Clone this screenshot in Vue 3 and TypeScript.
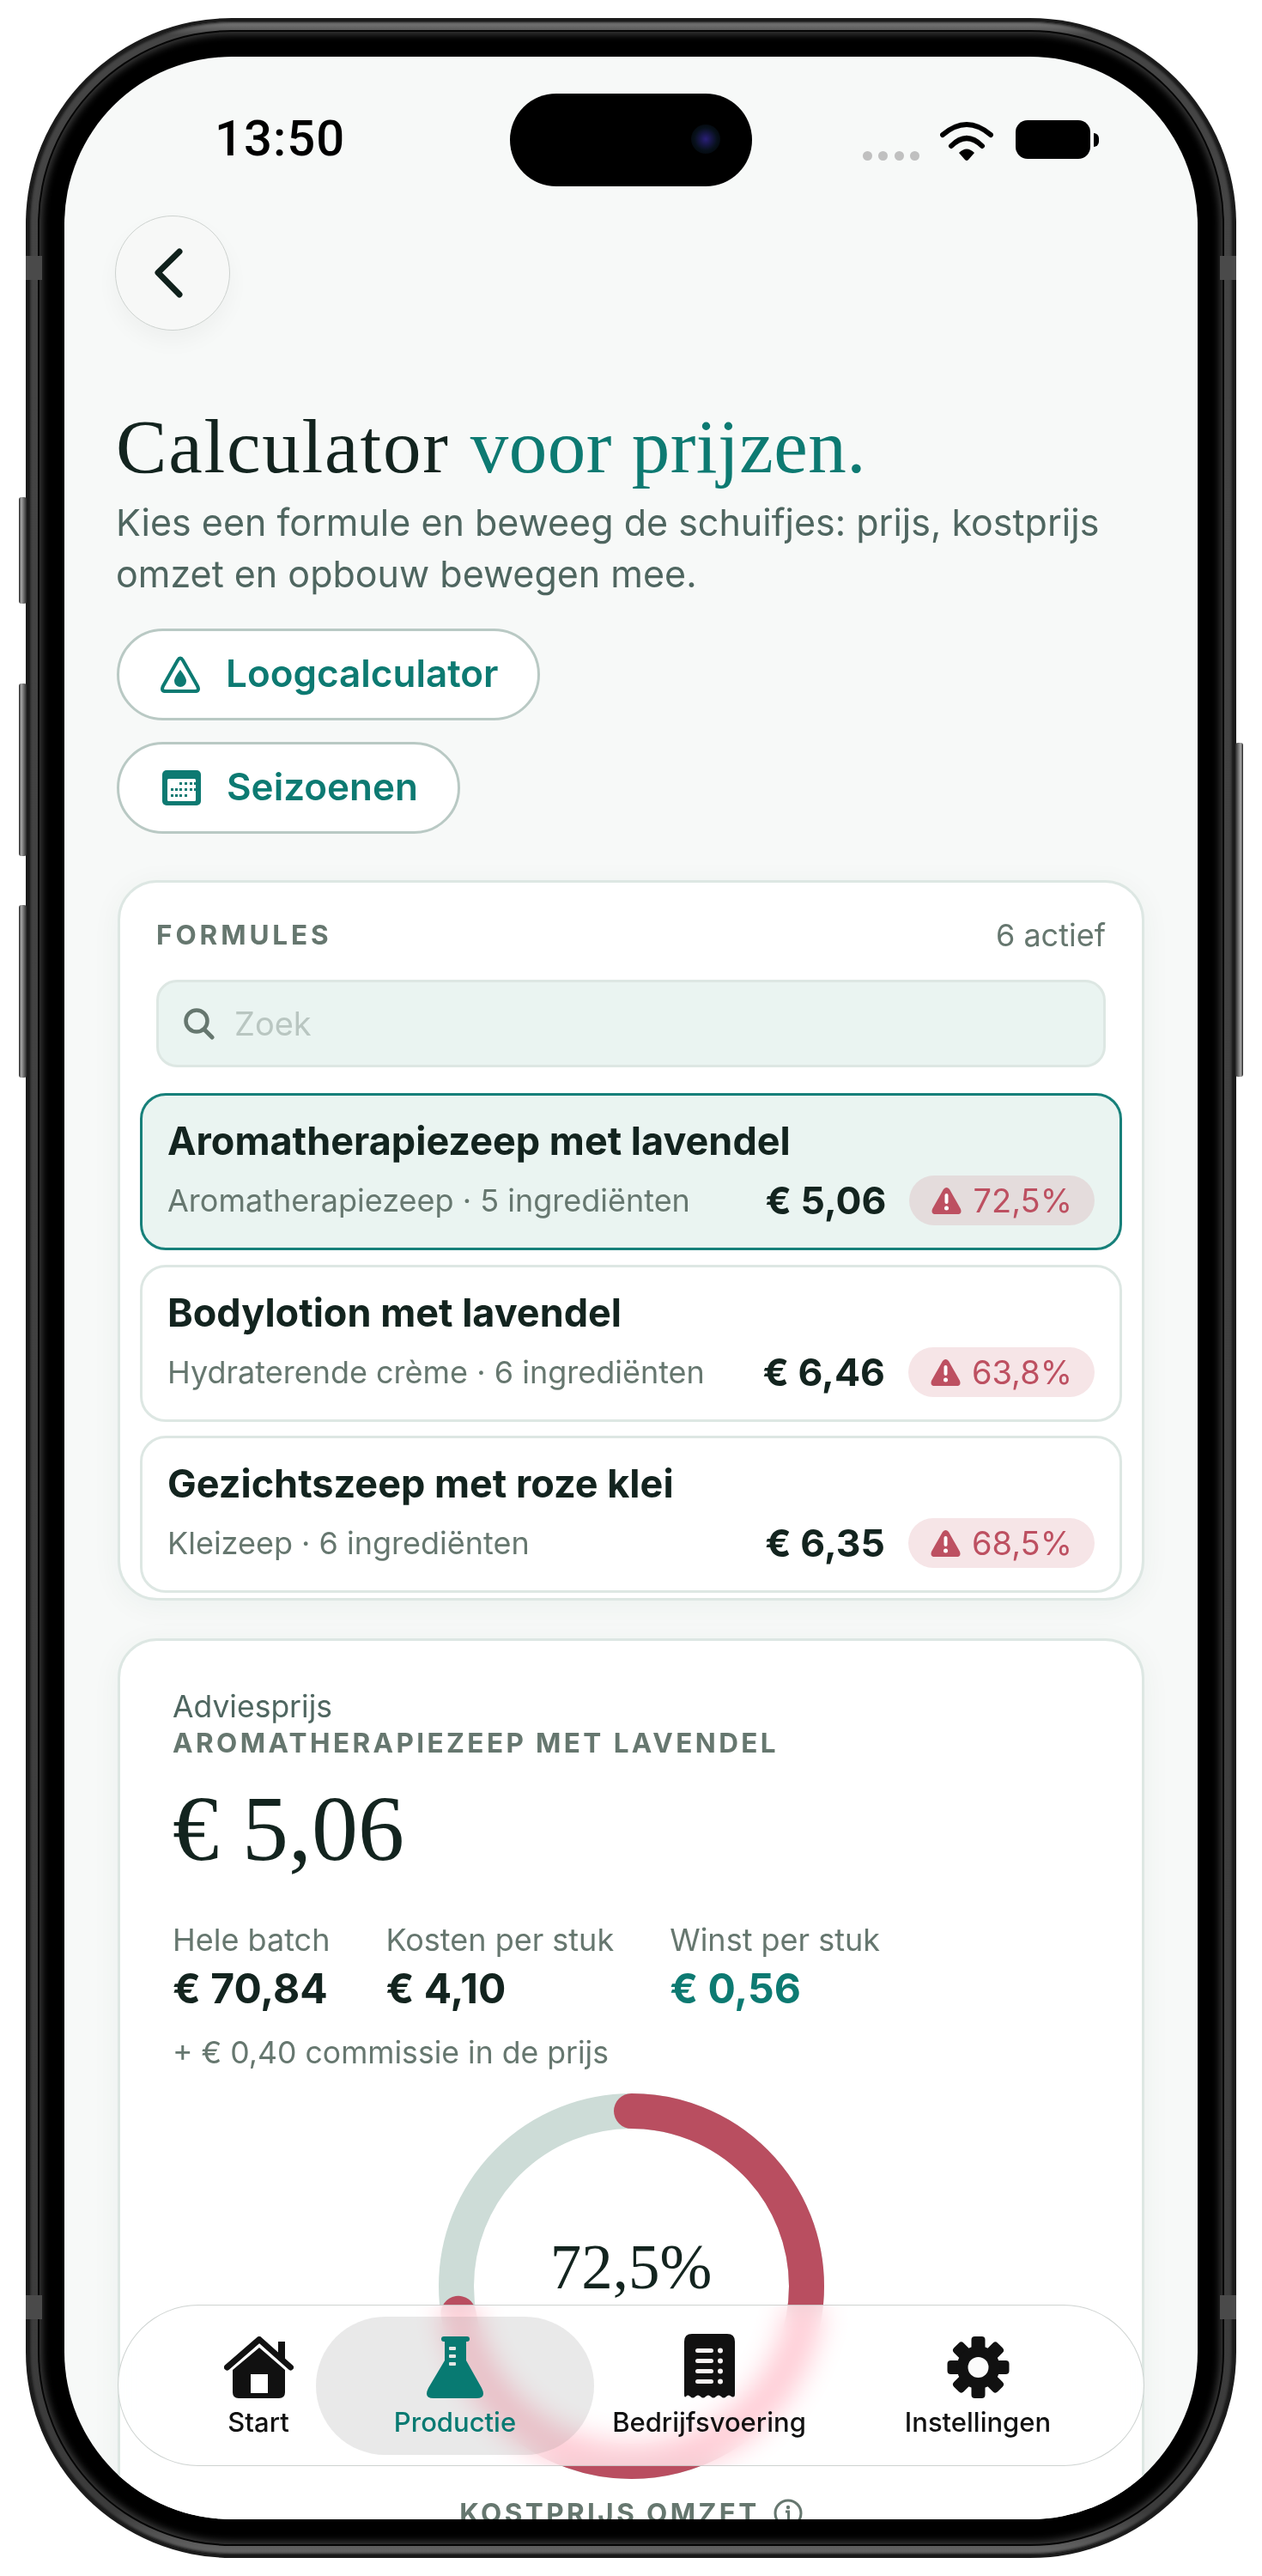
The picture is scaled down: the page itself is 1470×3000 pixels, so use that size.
<script setup lang="ts">
interface Formula { name: string; sub: string; price: string; margin: string; active?: boolean }
const formulas: Formula[] = [
  { name: 'Aromatherapiezeep met lavendel', sub: 'Aromatherapiezeep · 5 ingrediënten', price: '€ 5,06', margin: '72,5%', active: true },
  { name: 'Bodylotion met lavendel', sub: 'Hydraterende crème · 6 ingrediënten', price: '€ 6,46', margin: '63,8%' },
  { name: 'Gezichtszeep met roze klei', sub: 'Kleizeep · 6 ingrediënten', price: '€ 6,35', margin: '68,5%' },
]
const stats = [
  { label: 'Hele batch', value: '€ 70,84', accent: false },
  { label: 'Kosten per stuk', value: '€ 4,10', accent: false },
  { label: 'Winst per stuk', value: '€ 0,56', accent: true },
]
const gearAngles = [0, 45, 90, 135, 180, 225, 270, 315]
const calDots: [number, number][] = [
  [20, 14], [26, 14], [32, 14], [37, 14],
  [10, 21], [15, 21], [20, 21], [26, 21], [32, 21], [37, 21],
  [10, 28], [15, 28], [20, 28], [26, 28],
]
const receiptRows = [17, 29, 41, 53]
const flaskTicks = [12, 21, 30]
</script>

<template>
  <div class="page">
    <div class="device">
      <i class="hw hw-l hw-1"></i><i class="hw hw-l hw-2"></i><i class="hw hw-l hw-3"></i><i class="hw hw-r"></i>
      <i class="ant ant-tl"></i><i class="ant ant-tr"></i><i class="ant ant-bl"></i><i class="ant ant-br"></i>
      <div class="rim">
        <div class="gap">
          <div class="bezel">
            <div class="screen">
              <div class="island"><i class="lens"></i></div>

              <header class="status">
                <span class="time">13:50</span>
                <div class="status-icons">
                  <div class="dots"><i></i><i></i><i></i><i></i></div>
                  <svg class="wifi" width="62" height="46" viewBox="0 0 62 46">
                    <path d="M3 16Q31-8 59 16M13 29Q31 11 49 29" fill="none" stroke="#000" stroke-width="6" stroke-linecap="round" />
                    <path d="M22 37Q31 28 40 37L33 45Q31 47 29 45Z" fill="#000" />
                  </svg>
                  <div class="battery"></div>
                  <i class="nub"></i>
                </div>
              </header>

              <main class="content">
                <button class="back" type="button" aria-label="Terug">
                  <svg width="34" height="58" viewBox="0 0 34 58">
                    <path d="M29 4 4 28.500 29 54" fill="none" stroke="#10211c" stroke-width="7" stroke-linecap="round" stroke-linejoin="round" />
                  </svg>
                </button>

                <h1 class="title">Calculator <em>voor prijzen.</em></h1>
                <p class="lead">Kies een formule en beweeg de schuifjes: prijs, kostprijs omzet en opbouw bewegen mee.</p>

                <div class="actions">
                  <button class="chip chip-loog" type="button">
                    <svg width="46" height="43" viewBox="0 0 46 43">
                      <path d="M20 5Q23 0 26 5L43 35Q46 41 40 41H6Q0 41 3 35Z" fill="none" stroke="currentColor" stroke-width="4" />
                      <path d="M23 16Q30 25 30 29A7 7 0 0 1 16 29Q16 25 23 16Z" fill="currentColor" />
                    </svg>
                    <span>Loogcalculator</span>
                  </button>
                  <button class="chip chip-seizoen" type="button">
                    <svg width="45" height="41" viewBox="0 0 45 41">
                      <rect width="45" height="41" rx="5" fill="currentColor" />
                      <rect x="6" y="10" width="33" height="26" rx="1.500" fill="#fff" />
                      <rect v-for="d in calDots" :key="d.join()" :x="d[0]" :y="d[1]" width="3" height="3" fill="currentColor" />
                    </svg>
                    <span>Seizoenen</span>
                  </button>
                </div>

                <section class="card formulas">
                  <div class="formulas-head">
                    <span class="caps">FORMULES</span>
                    <span class="count">6 actief</span>
                  </div>
                  <div class="search">
                    <svg width="36" height="37" viewBox="0 0 36 37">
                      <circle cx="15" cy="15" r="12.500" fill="none" stroke="#66776f" stroke-width="4.500" />
                      <path d="M24 25 33 34" stroke="#66776f" stroke-width="5" stroke-linecap="round" />
                    </svg>
                    <span class="placeholder">Zoek</span>
                  </div>
                  <div class="rows">
                    <article v-for="f in formulas" :key="f.name" class="row" :class="{ active: f.active }">
                      <div class="row-name">{{ f.name }}</div>
                      <div class="row-bottom">
                        <span class="row-sub">{{ f.sub }}</span>
                        <span class="row-price">{{ f.price }}</span>
                        <span class="pill">
                          <svg width="35" height="32" viewBox="0 0 35 32">
                            <path d="M14 3Q17.500-1 21 3L34 26Q36 32 30 32H5Q-1 32 1 26Z" fill="#bd5061" />
                            <rect x="15.500" y="8" width="4" height="12" rx="2" fill="#fff" />
                            <circle cx="17.500" cy="25" r="2.500" fill="#fff" />
                          </svg>
                          <span>{{ f.margin }}</span>
                        </span>
                      </div>
                    </article>
                  </div>
                </section>

                <section class="card advice">
                  <div class="advice-label">Adviesprijs</div>
                  <div class="caps advice-name">AROMATHERAPIEZEEP MET LAVENDEL</div>
                  <div class="advice-price">€ 5,06</div>
                  <div class="stats">
                    <div v-for="s in stats" :key="s.label" class="stat">
                      <div class="stat-label">{{ s.label }}</div>
                      <div class="stat-value" :class="{ accent: s.accent }">{{ s.value }}</div>
                    </div>
                  </div>
                  <div class="commission">+ € 0,40 commissie in de prijs</div>
                  <div class="donut">
                    <svg width="449" height="449" viewBox="0 0 449 449">
                      <circle cx="224.500" cy="224.500" r="204" fill="none" stroke="#cddcd7" stroke-width="41" />
                      <circle cx="224.500" cy="224.500" r="204" fill="none" stroke="#b94e60" stroke-width="41" stroke-linecap="round" pathLength="100" stroke-dasharray="72.500 100" transform="rotate(-90 224.500 224.500)" />
                    </svg>
                    <span class="donut-value">72,5%</span>
                  </div>
                  <div class="caps donut-caption">
                    <span>KOSTPRIJS OMZET</span>
                    <svg width="34" height="34" viewBox="0 0 34 34">
                      <circle cx="17" cy="17" r="15" fill="none" stroke="#66776f" stroke-width="3" />
                      <circle cx="17" cy="10" r="2.200" fill="#66776f" />
                      <path d="M14 15h3.500v10" fill="none" stroke="#66776f" stroke-width="3" />
                    </svg>
                  </div>
                </section>
              </main>

              <nav class="tabs">
                <div class="tab">
                  <svg width="81" height="72" viewBox="0 0 81 72">
                    <path d="M63 6h8v22h-8z" fill="#111" />
                    <path d="M3.500 36 41 3.500 77.500 36" fill="none" stroke="#111" stroke-width="7" stroke-linecap="round" stroke-linejoin="round" />
                    <path fill-rule="evenodd" d="M10 39 41 13 71 39V65Q71 72 64 72H17Q10 72 10 65ZM31 44V66H51V44Z" fill="#111" />
                  </svg>
                  <span>Start</span>
                </div>
                <div class="tab tab-active">
                  <svg width="66" height="72" viewBox="0 0 66 72">
                    <path d="M20 0H47Q50 0 50 3T47 6H46V28L64 60Q70 72 58 72H8Q-4 72 2 60L21 28V6H20Q17 6 17 3T20 0Z" fill="#087a72" />
                    <rect v-for="y in flaskTicks" :key="y" x="26" :y="y" width="8" height="4" rx="1" fill="#e4e8e6" />
                  </svg>
                  <span>Productie</span>
                </div>
                <div class="tab">
                  <svg width="59" height="75" viewBox="0 0 59 75">
                    <path d="M9 0H50Q59 0 59 9V70Q59 75 55 73Q52 70 49 73Q46 76 43 73Q40 70 37 73Q34 76 31 73Q28 70 25 73Q22 76 19 73Q16 70 13 73Q10 76 7 73Q4 70 2 73Q0 75 0 70V9Q0 0 9 0Z" fill="#111" />
                    <template v-for="y in receiptRows" :key="y">
                      <rect x="13" :y="y" width="21" height="5" rx="2.500" fill="#f6f2f2" />
                      <circle cx="42" :cy="y + 2.500" r="3" fill="#f6f2f2" />
                    </template>
                  </svg>
                  <span>Bedrijfsvoering</span>
                </div>
                <div class="tab">
                  <svg width="73" height="72" viewBox="0 0 73 72">
                    <g transform="translate(36.500 36)">
                      <rect v-for="a in gearAngles" :key="a" x="-8" y="-36" width="16" height="24" rx="4" fill="#111" :transform="`rotate(${a})`" />
                      <circle r="25" fill="#111" />
                      <circle r="12" fill="#fbfbfb" />
                    </g>
                  </svg>
                  <span>Instellingen</span>
                </div>
              </nav>
            </div>
          </div>
        </div>
      </div>
    </div>
  </div>
</template>

<style>
html, body { margin: 0; background: #fff; }
</style>

<style scoped>
.page { height: 3000px; box-sizing: border-box; padding: 21px 30px 0; overflow: hidden; background: #fff; font-family: Inter, "Liberation Sans", sans-serif; color: #13241f; }
.device { position: relative; height: 2958px; box-sizing: border-box; padding: 4px; border-radius: 240px; background: #1b1b1b; }
.rim { height: 100%; box-sizing: border-box; padding: 10px; border-radius: 236px; background: linear-gradient(#7c7c7c, #454545 16px, #3c3c3c 2900px, #666); box-shadow: inset 0 0 3px 1px #111; }
.gap { height: 100%; box-sizing: border-box; padding: 2px; border-radius: 226px; background: #050505; }
.bezel { height: 100%; box-sizing: border-box; padding: 29px; border-radius: 224px; background: #000; box-shadow: inset 0 0 9px 3px #3c3c3c; }
.screen { position: relative; height: 100%; overflow: hidden; border-radius: 195px; background: #f7f9f8; }

.hw { position: absolute; display: block; width: 9px; background: linear-gradient(90deg, #1c1c1c, #a8a8a8 30%, #2a2a2a); border-radius: 3px; }
.hw-l { left: -8px; }
.hw-1 { top: 558px; height: 124px; }
.hw-2 { top: 775px; height: 201px; }
.hw-3 { top: 1033px; height: 201px; }
.hw-r { right: -8px; top: 844px; height: 389px; background: linear-gradient(270deg, #1c1c1c, #a8a8a8 30%, #2a2a2a); }
.ant { position: absolute; display: block; width: 19px; height: 28px; background: #4a4a4a; z-index: 1; }
.ant-tl { left: 0; top: 277px; }
.ant-tr { right: 0; top: 277px; }
.ant-bl { left: 0; top: 2652px; }
.ant-br { right: 0; top: 2652px; }

.island { position: absolute; z-index: 3; left: 519px; top: 43px; width: 282px; height: 108px; border-radius: 54px; background: #000; }
.lens { position: absolute; left: 211px; top: 36px; width: 34px; height: 34px; border-radius: 50%; background: radial-gradient(circle, #2a1f78 0, #171747 28%, #07101a 55%, #000 100%); }

.status { display: flex; justify-content: space-between; align-items: flex-start; height: 185px; box-sizing: border-box; padding: 0 115px 0 175px; }
.time { margin-top: 62px; font-family: Roboto, sans-serif; font-weight: 500; font-size: 58px; line-height: 66px; letter-spacing: 1px; color: #000; }
.status-icons { display: flex; align-items: flex-start; margin-top: 74px; }
.dots { display: flex; gap: 7.500px; margin-top: 36px; margin-right: 24px; }
.dots i { display: block; width: 11px; height: 11px; border-radius: 50%; background: #c0c0c0; }
.wifi { margin-top: 1px; margin-right: 26px; }
.battery { width: 87px; height: 45px; border-radius: 14px; background: #000; }
.nub { display: block; width: 6px; height: 16px; margin: 15px 0 0 4px; border-radius: 0 8px 8px 0; background: #000; }

.content { padding: 0 62px; }
.back { display: flex; align-items: center; justify-content: center; box-sizing: border-box; width: 134px; height: 134px; margin-left: -3px; padding: 0 8px 0 0; border: 1.500px solid #cdd2cf; border-radius: 50%; background: #f7f8f7; box-shadow: 0 12px 26px rgba(0, 0, 0, .04); }
.title { margin: 85px 0 0 -2px; font-family: "Liberation Serif", serif; font-weight: 400; font-size: 89px; line-height: 100px; letter-spacing: 1.800px; color: #13241f; }
.title em { font-style: normal; letter-spacing: .5px; color: #0d7a72; }
.lead { margin: 8px 0 0 -2px; font-size: 43px; line-height: 60px; color: #4f6660; }

.actions { display: flex; flex-direction: column; align-items: flex-start; gap: 25px; margin: 34px 0 0 -1px; }
.chip { display: flex; align-items: center; box-sizing: border-box; height: 107px; border: 3px solid #b9c9c4; border-radius: 54px; background: #fff; font-family: inherit; font-weight: 600; font-size: 44px; color: #0d7a72; }
.chip span { margin-bottom: 3px; }
.chip-loog { width: 493px; padding: 0 0 0 48px; gap: 30px; }
.chip-seizoen { width: 400px; padding: 0 0 0 50px; gap: 30px; }

.card { box-sizing: border-box; border: 3px solid #dde7e3; border-radius: 46px; background: #fff; box-shadow: 0 6px 34px rgba(20, 70, 60, .05); }
.caps { font-weight: 700; font-size: 31.500px; line-height: 36px; letter-spacing: 3.400px; color: #66776f; }

.formulas { margin-top: 54px; padding: 41px 23px 6px; }
.formulas-head { display: flex; justify-content: space-between; align-items: center; height: 40px; padding: 0 19px; }
.formulas-head .caps { letter-spacing: 3.900px; }
.count { font-size: 36px; color: #66776f; }
.search { display: flex; align-items: center; gap: 23px; box-sizing: border-box; height: 102px; margin: 32px 19px 0; padding: 0 29px; border: 3px solid #dde7e3; border-radius: 24px; background: #eaf4f1; }
.placeholder { font-size: 38px; color: #b9c6c1; }
.rows { display: flex; flex-direction: column; gap: 16.700px; margin-top: 30px; }
.row { box-sizing: border-box; height: 183px; padding: 28px 29px 0 29px; border: 3px solid #dde7e3; border-radius: 30px; background: #fff; }
.row.active { border-color: #17807a; background: #eaf4f1; }
.row-name { font-weight: 700; font-size: 45px; line-height: 50px; color: #13241f; }
.row-bottom { display: flex; align-items: center; height: 58px; margin-top: 15px; }
.row-sub { flex: 1; font-size: 36px; color: #66776f; white-space: nowrap; }
.row-price { margin-right: 27px; font-weight: 700; font-size: 44.500px; color: #13241f; }
.pill { display: flex; align-items: center; gap: 13px; height: 58px; padding: 0 26px; border-radius: 29px; background: #f6e5e7; font-size: 38px; color: #bd5061; }
.row.active .pill { background: #e4dcdc; }

.advice { margin-top: 44px; padding: 56px 61px 60px; }
.advice-label { font-size: 35.500px; line-height: 42px; color: #4f6660; }
.advice-name { margin-top: 3px; }
.advice-price { margin-top: 22px; font-family: "Liberation Serif", serif; font-size: 108px; line-height: 120px; color: #13241f; }
.stats { display: flex; gap: 65px; margin-top: 48px; }
.stat-label { font-size: 36px; line-height: 42px; color: #66776f; }
.stat-value { margin-top: 10px; font-weight: 700; font-size: 48px; line-height: 52px; color: #13241f; }
.stat-value.accent { color: #0d7a72; }
.commission { margin-top: 28px; font-size: 35.600px; line-height: 42px; color: #66776f; }
.donut { position: relative; display: flex; justify-content: center; height: 449px; margin-top: 26px; }
.donut-value { position: absolute; left: 0; right: 0; top: 163px; text-align: center; font-family: "Liberation Serif", serif; font-size: 73px; line-height: 80px; color: #13241f; }
.donut-caption { display: flex; justify-content: center; align-items: center; gap: 16px; margin-top: 22px; }

.tabs { position: absolute; z-index: 2; left: 62px; right: 62px; top: 2618px; display: grid; grid-template-columns: 134px 324px 268px 358px; align-items: center; box-sizing: border-box; height: 188px; padding: 0 16px 0 96px; border: 1.500px solid rgba(185, 192, 189, .7); border-radius: 94px; background: rgba(255, 255, 255, .74); -webkit-backdrop-filter: blur(16px) saturate(2); backdrop-filter: blur(16px) saturate(2); }
.tab { display: flex; flex-direction: column; align-items: center; justify-content: flex-end; box-sizing: border-box; height: 161px; padding-bottom: 20px; gap: 10px; font-weight: 500; font-size: 31px; line-height: 36px; color: #111; white-space: nowrap; }
.tab-active { border-radius: 81px; background: rgba(120, 120, 120, .16); color: #087a72; }
</style>
